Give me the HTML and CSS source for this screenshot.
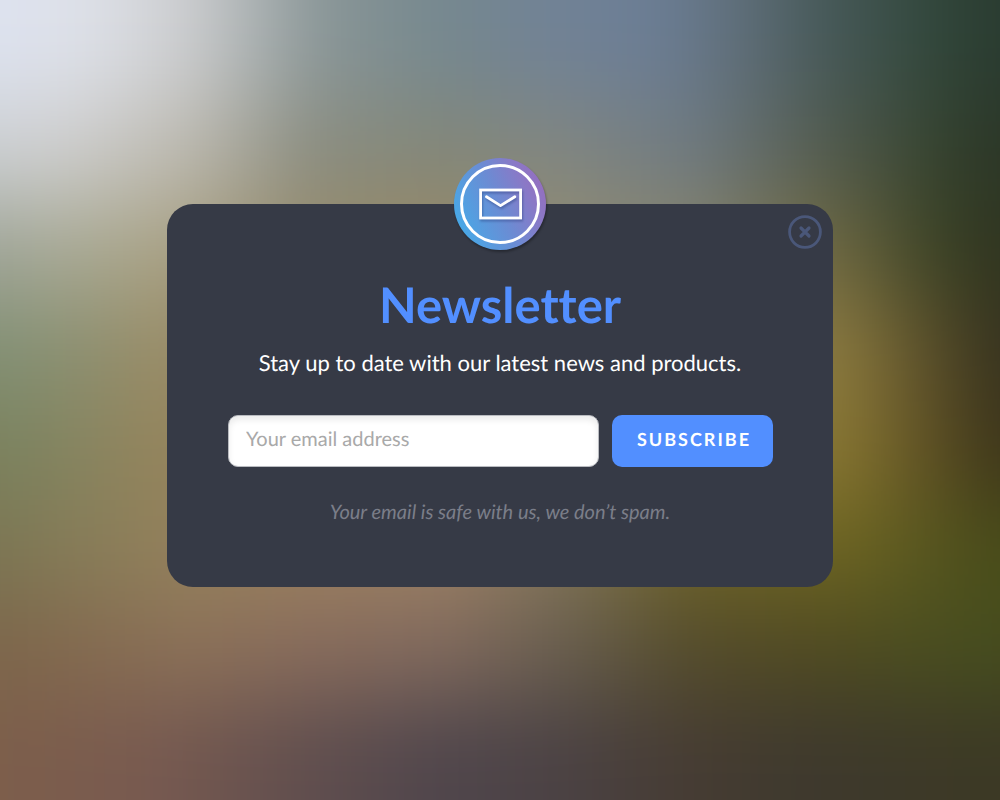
FILE: index.html
```html
<!DOCTYPE html>
<html lang="en">
<head>
<meta charset="utf-8">
<meta name="viewport" content="width=device-width, initial-scale=1">
<title>Newsletter</title>
<link rel="stylesheet" href="styles.css">
</head>
<body>
<svg class="backdrop" viewBox="0 0 1000 800" preserveAspectRatio="none" aria-hidden="true">
  <defs>
    <linearGradient id="r1" gradientUnits="userSpaceOnUse" x1="0" x2="1000"><stop offset="0" stop-color="#dde2ef"/><stop offset=".09" stop-color="#dde0e7"/><stop offset=".19" stop-color="#cbccce"/><stop offset=".25" stop-color="#adb3b4"/><stop offset=".32" stop-color="#8a9697"/><stop offset=".44" stop-color="#76888e"/><stop offset=".56" stop-color="#718296"/><stop offset=".66" stop-color="#6b7d94"/><stop offset=".74" stop-color="#5f6e79"/><stop offset=".82" stop-color="#485a5a"/><stop offset=".94" stop-color="#31463a"/><stop offset="1" stop-color="#2a3b30"/></linearGradient>
    <linearGradient id="r2" gradientUnits="userSpaceOnUse" x1="0" x2="1000"><stop offset="0" stop-color="#cccfd2"/><stop offset=".06" stop-color="#cecece"/><stop offset=".19" stop-color="#bbb8ae"/><stop offset=".31" stop-color="#8b8d80"/><stop offset=".44" stop-color="#838779"/><stop offset=".56" stop-color="#818681"/><stop offset=".69" stop-color="#6f7a81"/><stop offset=".81" stop-color="#575f54"/><stop offset=".94" stop-color="#35422e"/><stop offset="1" stop-color="#2b3627"/></linearGradient>
    <linearGradient id="r3" gradientUnits="userSpaceOnUse" x1="0" x2="1000"><stop offset="0" stop-color="#a0a598"/><stop offset=".06" stop-color="#a8aa96"/><stop offset=".16" stop-color="#aaa387"/><stop offset=".31" stop-color="#978b6b"/><stop offset=".44" stop-color="#988965"/><stop offset=".56" stop-color="#928c73"/><stop offset=".69" stop-color="#86836c"/><stop offset=".83" stop-color="#6e6841"/><stop offset=".94" stop-color="#3b4225"/><stop offset="1" stop-color="#303520"/></linearGradient>
    <linearGradient id="r4" gradientUnits="userSpaceOnUse" x1="0" x2="1000"><stop offset="0" stop-color="#829075"/><stop offset=".06" stop-color="#8a9072"/><stop offset=".17" stop-color="#9a8c67"/><stop offset=".4" stop-color="#968763"/><stop offset=".7" stop-color="#8c8050"/><stop offset=".84" stop-color="#8b793e"/><stop offset=".94" stop-color="#544a28"/><stop offset="1" stop-color="#37331f"/></linearGradient>
    <linearGradient id="r5" gradientUnits="userSpaceOnUse" x1="0" x2="1000"><stop offset="0" stop-color="#7a825e"/><stop offset=".06" stop-color="#838460"/><stop offset=".16" stop-color="#94845c"/><stop offset=".5" stop-color="#96825e"/><stop offset=".84" stop-color="#887631"/><stop offset=".94" stop-color="#594c22"/><stop offset="1" stop-color="#3e361a"/></linearGradient>
    <linearGradient id="r6" gradientUnits="userSpaceOnUse" x1="0" x2="1000"><stop offset="0" stop-color="#7c7653"/><stop offset=".06" stop-color="#847b57"/><stop offset=".17" stop-color="#92805b"/><stop offset=".31" stop-color="#9b8060"/><stop offset=".45" stop-color="#9b8065"/><stop offset=".56" stop-color="#80745a"/><stop offset=".69" stop-color="#6d6229"/><stop offset=".84" stop-color="#6c6421"/><stop offset=".94" stop-color="#55551e"/><stop offset="1" stop-color="#494c19"/></linearGradient>
    <linearGradient id="r7" gradientUnits="userSpaceOnUse" x1="0" x2="1000"><stop offset="0" stop-color="#7d664b"/><stop offset=".06" stop-color="#82694e"/><stop offset=".19" stop-color="#8b7058"/><stop offset=".31" stop-color="#876b5c"/><stop offset=".44" stop-color="#80695d"/><stop offset=".56" stop-color="#695e4f"/><stop offset=".69" stop-color="#544c2c"/><stop offset=".81" stop-color="#504a22"/><stop offset=".94" stop-color="#494e20"/><stop offset="1" stop-color="#454c1e"/></linearGradient>
    <linearGradient id="r8" gradientUnits="userSpaceOnUse" x1="0" x2="1000"><stop offset="0" stop-color="#7d5e4b"/><stop offset=".15" stop-color="#785a50"/><stop offset=".31" stop-color="#604e4e"/><stop offset=".44" stop-color="#50464c"/><stop offset=".56" stop-color="#4b4244"/><stop offset=".69" stop-color="#463c33"/><stop offset=".81" stop-color="#3e392d"/><stop offset="1" stop-color="#3c3924"/></linearGradient>
    <filter id="soften" filterUnits="userSpaceOnUse" x="-150" y="-150" width="1300" height="1100" color-interpolation-filters="sRGB"><feGaussianBlur stdDeviation="28 42"/></filter>
  </defs>
  <g filter="url(#soften)">
    <rect x="-150" y="-150" width="1300" height="250" fill="url(#r1)"/>
    <rect x="-150" y="100" width="1300" height="100" fill="url(#r2)"/>
    <rect x="-150" y="200" width="1300" height="100" fill="url(#r3)"/>
    <rect x="-150" y="300" width="1300" height="100" fill="url(#r4)"/>
    <rect x="-150" y="400" width="1300" height="100" fill="url(#r5)"/>
    <rect x="-150" y="500" width="1300" height="100" fill="url(#r6)"/>
    <rect x="-150" y="600" width="1300" height="100" fill="url(#r7)"/>
    <rect x="-150" y="700" width="1300" height="250" fill="url(#r8)"/>
  </g>
</svg>
<main class="page">
  <section class="card" aria-labelledby="title">
    <svg class="badge" viewBox="0 0 100 100" aria-hidden="true">
      <defs>
        <linearGradient id="badge-fill" x1=".05" y1=".7" x2=".95" y2=".3"><stop offset="0" stop-color="#49a7e6"/><stop offset=".5" stop-color="#6c8bd3"/><stop offset=".85" stop-color="#8b78c6"/><stop offset="1" stop-color="#9270c0"/></linearGradient>
      </defs>
      <circle class="badge-disc" cx="50" cy="50" r="46" fill="url(#badge-fill)"/>
      <circle cx="50" cy="50" r="38.5" fill="none" stroke="#fff" stroke-width="3"/>
      <g class="envelope" fill="none" stroke="#fff" stroke-width="2.8">
        <rect x="30.6" y="36" width="40" height="28"/>
        <path d="M36.5 42.8 50.5 51.6 64.8 42.8" stroke-linecap="round" stroke-linejoin="round"/>
      </g>
    </svg>
    <button class="close" type="button" aria-label="Close">
      <svg viewBox="0 0 34 34" fill="none" stroke="currentColor" aria-hidden="true">
        <circle cx="17" cy="17" r="15.4" stroke-width="2.8"/>
        <path d="M13 13 21 21M21 13 13 21" stroke-width="3.2" stroke-linecap="round"/>
      </svg>
    </button>
    <h1 class="title" id="title">Newsletter</h1>
    <p class="lead">Stay up to date with our latest news and products.</p>
    <form class="form">
      <input class="email" type="email" placeholder="Your email address" aria-label="Your email address">
      <button class="subscribe" type="submit">SUBSCRIBE</button>
    </form>
    <p class="note">Your email is safe with us, we don’t spam.</p>
  </section>
</main>
</body>
</html>
```
FILE: styles.css
```css
* {
  box-sizing: border-box;
}

body {
  margin: 0;
  background: #6b6450;
  font-family: Lato, "Liberation Sans", sans-serif;
  font-variant-ligatures: none;
  text-rendering: geometricPrecision;
}

.backdrop {
  position: fixed;
  inset: 0;
  width: 100%;
  height: 100%;
}

.page {
  position: relative;
  display: flex;
  align-items: center;
  justify-content: center;
  min-height: 100vh;
  padding: 56px 16px 65px;
}

.card {
  position: relative;
  width: 100%;
  max-width: 666px;
  padding: 71px 60px 61px;
  border-radius: 26px;
  background: #363a46;
  text-align: center;
}

.badge {
  position: absolute;
  top: -50px;
  left: calc(50% - 50px);
  width: 100px;
  height: 100px;
  overflow: visible;
}

.badge-disc {
  filter: drop-shadow(1px 2px 1px rgba(0, 0, 0, 0.3));
}

.envelope {
  filter: drop-shadow(1px 2px 1px rgba(30, 50, 110, 0.4));
}

.close {
  position: absolute;
  top: 11px;
  right: 11px;
  width: 34px;
  height: 34px;
  padding: 0;
  border: 0;
  background: none;
  color: #4a5779;
  cursor: pointer;
}

.close svg {
  display: block;
}

.title {
  margin: 0 0 12px;
  color: #528fff;
  font-size: 49px;
  font-weight: 700;
  line-height: 61px;
}

.lead {
  margin: 0 0 37px;
  color: #fff;
  font-size: 22px;
  line-height: 30px;
}

.form {
  display: flex;
  gap: 13px;
  margin: 0 0 31px;
  padding-left: 1px;
}

.email,
.subscribe {
  height: 52px;
  border-radius: 10px;
  font-family: inherit;
  text-rendering: inherit;
}

.email {
  flex: 1;
  min-width: 0;
  padding: 0 17px 5px;
  border: 1px solid #b9bbc0;
  background: #fff;
  box-shadow: inset 0 4px 6px rgba(0, 0, 0, 0.08);
  color: #363a46;
  font-size: 20px;
}

.email::placeholder {
  color: #a9a9a9;
  opacity: 1;
}

.subscribe {
  padding: 0 22px 4px 25px;
  border: 0;
  background: #528fff;
  color: #fff;
  font-size: 18px;
  font-weight: 700;
  letter-spacing: 2px;
  cursor: pointer;
}

.note {
  margin: 0;
  color: #7b7e89;
  font-size: 20px;
  font-style: italic;
  line-height: 28px;
}
```
